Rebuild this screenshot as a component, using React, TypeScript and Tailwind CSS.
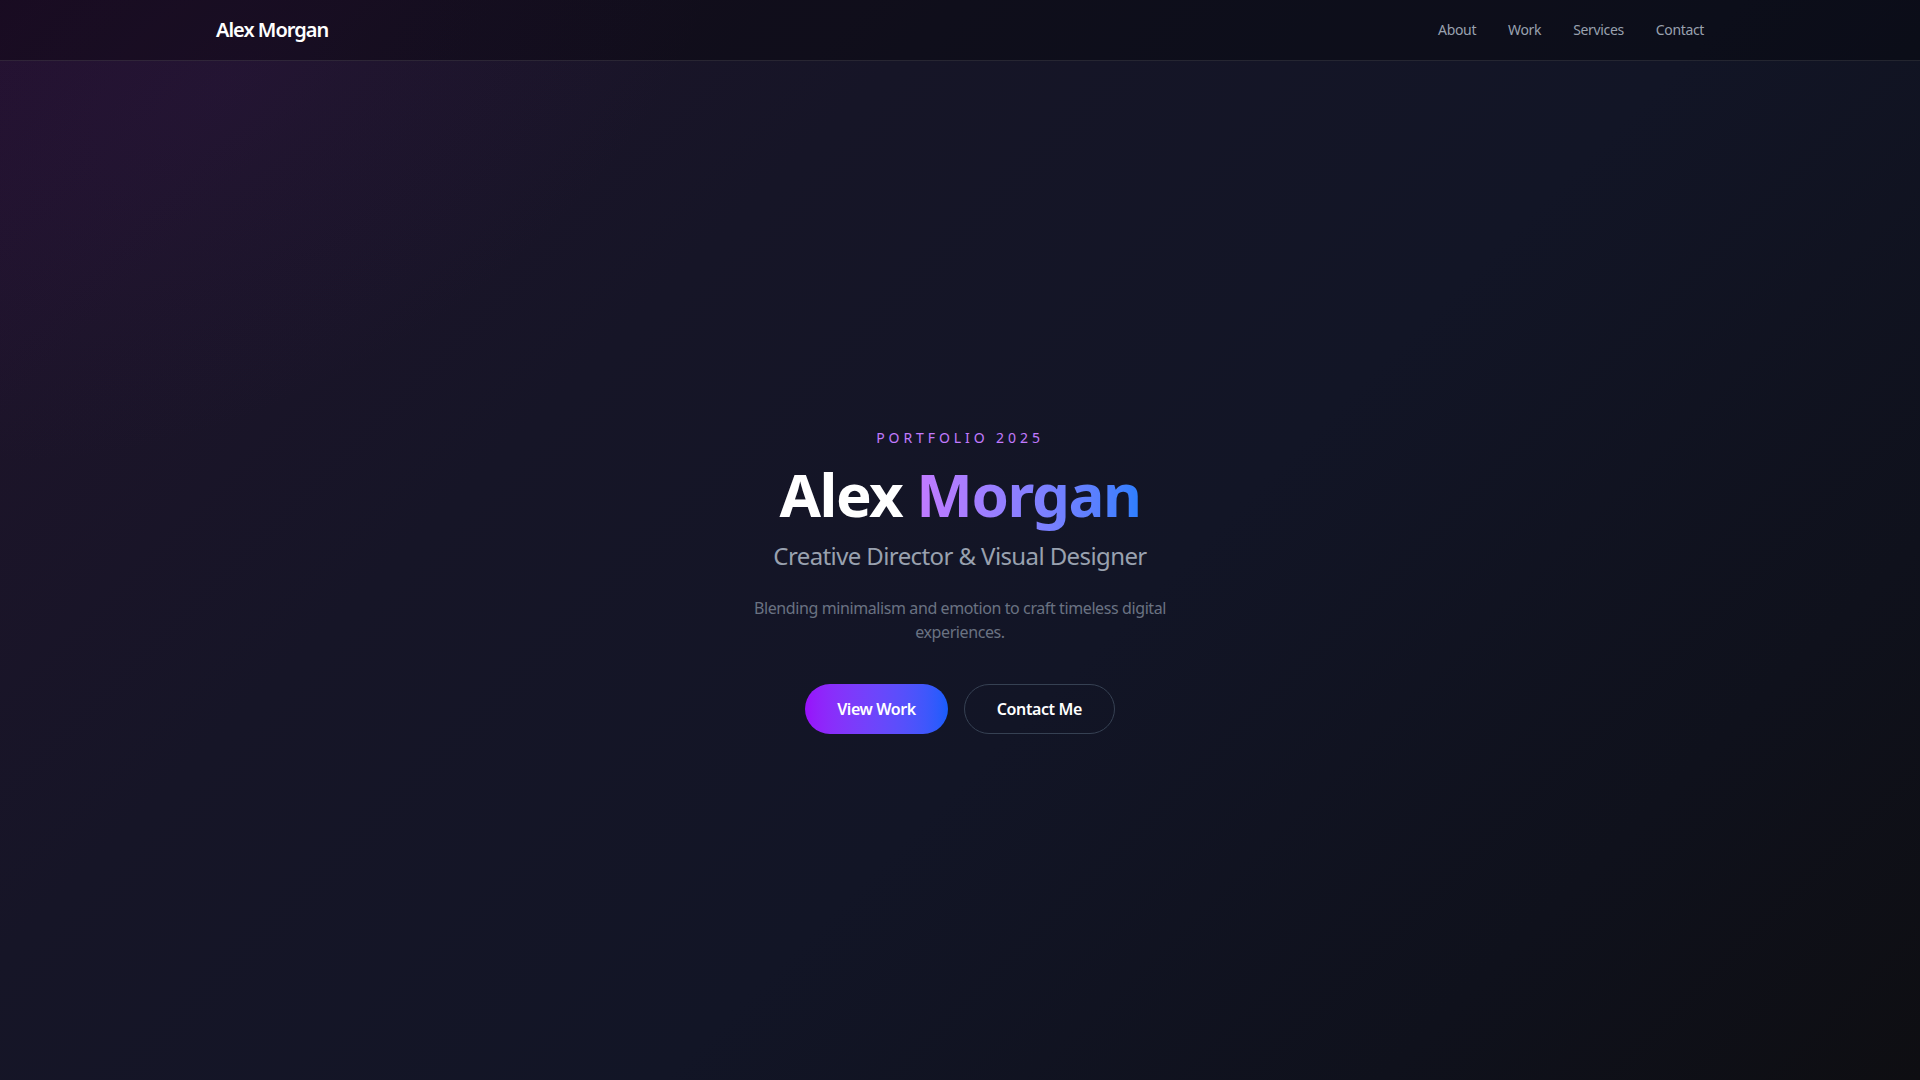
import React from 'react';

const navLinks = ['About', 'Work', 'Services', 'Contact'];

export default function App() {
  return (
    <div className="relative min-h-screen flex flex-col overflow-hidden bg-[linear-gradient(135deg,#23112f_0%,#1c1429_14%,#161527_32%,#121526_58%,#0f111c_82%,#0e0e12_100%)] font-['Noto_Sans','Open_Sans',sans-serif] text-white">
      {/* faint purple haze, top left */}
      <div className="pointer-events-none absolute -top-60 -left-80 h-[640px] w-[1100px] -rotate-[30deg] rounded-full bg-[radial-gradient(ellipse,rgba(76,29,110,0.12)_0%,rgba(76,29,110,0)_70%)]" />

      {/* Header */}
      <header className="relative z-10 h-[61px] border-b border-white/10 bg-black/30">
        <div className="mx-auto flex h-full max-w-screen-2xl items-center justify-between px-6">
          <span className="text-xl font-semibold tracking-[-0.05em] text-white">Alex Morgan</span>
          <nav className="flex items-center gap-8 text-sm tracking-tight text-gray-400">
            {navLinks.map(link => (
              <a key={link} href="#" className="hover:text-white transition-colors">
                {link}
              </a>
            ))}
          </nav>
        </div>
      </header>

      {/* Hero */}
      <main className="relative z-10 flex flex-1 items-center justify-center pt-5">
        <div className="flex flex-col items-center text-center">
          <p className="text-sm leading-5 tracking-[0.28em] text-purple-400">PORTFOLIO 2025</p>
          <h1 className="mt-4 text-6xl leading-none font-bold tracking-tight">
            Alex{' '}
            <span className="bg-gradient-to-r from-purple-400 to-blue-500 bg-clip-text text-transparent">Morgan</span>
          </h1>
          <h2 className="mt-4 text-2xl tracking-tight text-gray-400">Creative Director &amp; Visual Designer</h2>
          <p className="mt-6 max-w-[448px] text-base leading-6 tracking-tight text-gray-500">
            Blending minimalism and emotion to craft timeless digital experiences.
          </p>
          <div className="mt-10 flex items-center gap-4">
            <button className="rounded-full bg-gradient-to-r from-purple-600 to-blue-600 px-8 py-[13px] text-base font-semibold tracking-tight text-white">
              View Work
            </button>
            <button className="rounded-full border border-gray-700 px-8 py-3 text-base font-semibold tracking-tight text-white">
              Contact Me
            </button>
          </div>
        </div>
      </main>
    </div>
  );
}
